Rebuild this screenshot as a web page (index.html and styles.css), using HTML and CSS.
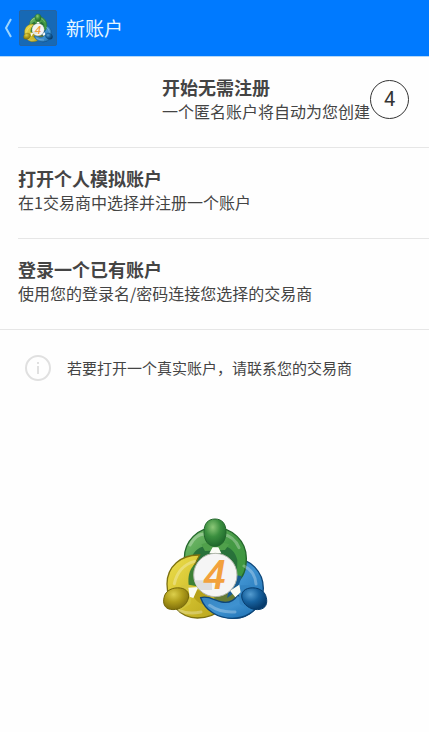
FILE: index.html
```html
<!DOCTYPE html>
<html lang="zh-CN">
<head>
<meta charset="utf-8">
<meta name="viewport" content="width=device-width, initial-scale=1">
<title>新账户</title>
<link rel="stylesheet" href="styles.css">
</head>
<body>

<header class="topbar">
<a class="back" href="#" aria-label="返回">
<svg class="chevron" viewBox="0 0 8 20"><path d="M7 1 L2 10 L7 19"/></svg>
<span class="app-icon"><svg viewBox="20 20 320 315"><use href="#mt-logo"/></svg></span>
</a>
<h1>新账户</h1>
</header>

<main>
<ul class="options">
<li>
<a class="option option-start" href="#">
<span class="text"><strong>开始无需注册</strong><span>一个匿名账户将自动为您创建</span></span>
<span class="badge">4</span>
</a>
</li>
<li>
<a class="option" href="#">
<span class="text"><strong>打开个人模拟账户</strong><span>在1交易商中选择并注册一个账户</span></span>
</a>
</li>
<li>
<a class="option" href="#">
<span class="text"><strong>登录一个已有账户</strong><span>使用您的登录名/密码连接您选择的交易商</span></span>
</a>
</li>
</ul>

<p class="info">
<svg class="info-icon" viewBox="0 0 26 26"><circle cx="13" cy="13" r="12"/><path d="M13 11V19M13 7V9"/></svg>
<span>若要打开一个真实账户，请联系您的交易商</span>
</p>

<svg class="logo" viewBox="0 0 360 345" role="img" aria-label="MetaTrader 4">
<defs>
<radialGradient id="green" cx=".4" cy=".3" r=".7"><stop offset="0" stop-color="#8cc878"/><stop offset=".5" stop-color="#3b8f3f"/><stop offset="1" stop-color="#1f692c"/></radialGradient>
<radialGradient id="yellow" cx=".4" cy=".3" r=".7"><stop offset="0" stop-color="#dccf4c"/><stop offset=".5" stop-color="#b09e1b"/><stop offset="1" stop-color="#80700c"/></radialGradient>
<radialGradient id="blue" cx=".35" cy=".3" r=".7"><stop offset="0" stop-color="#549cd0"/><stop offset=".5" stop-color="#17629f"/><stop offset="1" stop-color="#073c6d"/></radialGradient>
<linearGradient id="green-ring" x2="1" y2="1"><stop offset="0" stop-color="#7fc274"/><stop offset=".5" stop-color="#459a45"/><stop offset="1" stop-color="#3b963e"/></linearGradient>
<linearGradient id="yellow-ring" x2="1" y2="1"><stop offset="0" stop-color="#efe04e"/><stop offset=".5" stop-color="#d3c12f"/><stop offset="1" stop-color="#b5a11a"/></linearGradient>
<linearGradient id="blue-ring" x2="1" y2="1"><stop offset="0" stop-color="#3583c0"/><stop offset=".5" stop-color="#3f92d0"/><stop offset="1" stop-color="#1769ad"/></linearGradient>
<g id="mt-logo">
<!-- arms -->
<ellipse cx="237" cy="235" rx="88" ry="90" fill="url(#blue-ring)" stroke="#0d4679" stroke-width="4"/>
<path d="M180 53C231 53 274 92 274 145C274 180 262 205 246 216L110 210C96 192 88 172 88 145C88 92 129 53 180 53Z" fill="url(#green-ring)" stroke="#24672c" stroke-width="4"/>
<path d="M108 145C117 121 137 106 160 107H200C224 108 242 126 247 150L246 195H112Z" fill="#28713a"/>
<path d="M134 135C78 133 36 170 36 222C36 281 76 324 127 324C158 324 185 312 205 293L182 225L116 170Z" fill="url(#yellow-ring)" stroke="#7d7110" stroke-width="4"/>
<path d="M117 165C103 180 98 200 101 224L135 230L126 165Z" fill="#3c8035"/>
<path d="M104 235Q116 283 165 290L170 250Z" fill="#b5a11a"/>
<path d="M178 248H250V277H178Z" fill="#667b35"/>
<path d="M260 199C253 226 242 250 216 264L222 238L242 195Z" fill="#175b90"/>
<path d="M137 263C150 301 188 325 232 325C270 325 301 306 316 275L247 256C237 273 222 280 200 276C178 272 162 256 137 263Z" fill="url(#blue-ring)" stroke="#0d4679" stroke-width="4"/>
<path d="M58 221Q70 167 119 154M105 105Q126 66 157 73M204 73Q237 79 252 113M267 168Q300 184 303 222M164 286Q196 309 240 306M72 301Q100 314 138 306" fill="none" stroke="#fff" stroke-opacity=".28" stroke-width="9" stroke-linecap="round"/>
<!-- shoulders -->
<path d="M139 103Q158 94 180 102Q204 94 223 103L210 120L150 123Z" fill="#50a04b"/>
<path d="M79 226L115 228L106 282L76 301Z" fill="#d4c53b"/>
<path d="M286 226L250 226L254 282L286 301Z" fill="#3485c3"/>
<path d="M163 130L173 112H190L199 130Z M100 233L130 231L115 264L104 260Z M225 242L253 224L257 247L241 262Z" fill="#fafcf5"/>
<!-- heads -->
<path d="M180 27C201 27 213 41 213 65C213 91 201 109 180 109C159 109 147 91 147 65C147 41 159 27 180 27Z" fill="url(#green)" stroke="#23662c" stroke-width="3"/>
<path d="M27 263C31 241 54 231 76 234C97 237 106 252 98 271C90 291 67 302 46 298C29 295 23 281 27 263Z" fill="url(#yellow)" stroke="#736609" stroke-width="3"/>
<path d="M334 263C330 241 307 231 285 234C264 237 255 252 263 271C271 291 294 302 315 298C332 295 338 281 334 263Z" fill="url(#blue)" stroke="#073c6c" stroke-width="3"/>
<circle cx="181" cy="195" r="65" fill="#f5f5f5" stroke="#b5b8ae" stroke-width="3"/>
<path d="M118 211H171V240H136Q123 229 118 211Z" fill="#dedede"/>
<text class="logo-number" x="179" y="238" text-anchor="middle">4</text>
</g>
</defs>
<use href="#mt-logo"/>
</svg>
</main>

</body>
</html>
```
FILE: styles.css
```css
* {box-sizing:border-box;}
body {margin:0; background:#fefefe; color:#444; font-family:"Noto Sans CJK SC", sans-serif; font-size:16px; line-height:24px;}
a {color:inherit; text-decoration:none;}

.topbar {display:flex; align-items:center; gap:9px; height:57px; padding-left:4px; background:#007aff; border-bottom:1px solid #b5d8f7; color:#e5f6ff;}
.topbar h1 {margin:0; font-size:19px; font-weight:400;}
.back {display:flex; align-items:center; gap:7px;}
.chevron {width:8px; height:20px; fill:none; stroke:#9bd5ff; stroke-width:2;}
.app-icon {display:flex; align-items:center; justify-content:center; width:38px; height:36px; background:#1769b5; border:1px solid #2464a3; border-radius:2px;}
.app-icon svg {width:30px; height:30px;}

.options {margin:0; padding:0; list-style:none; border-bottom:1px solid #e6e6e6;}
.options li {margin-left:18px;}
.options li + li {border-top:1px solid #e6e6e6;}
.option {display:flex; align-items:center; padding:18px 20px 24px 0;}
.option-start {justify-content:flex-end;}
.text {display:flex; flex-direction:column;}
.text strong {font-size:18px; font-weight:700;}
.badge {display:flex; align-items:center; justify-content:center; width:39px; height:39px; border:1px solid #333; border-radius:50%; font-family:Roboto, sans-serif; font-size:20px; color:#333;}

.info {display:flex; align-items:center; gap:16px; margin:0; padding:24px 20px 24px 25px; font-size:15px; line-height:28px;}
.info-icon {flex:none; width:26px; height:26px; fill:none; stroke:#e0e0e0; stroke-width:2;}

.logo {display:block; width:120px; height:115px; margin:104px auto 0;}
.logo-number {font-family:Roboto, sans-serif; font-size:124px; font-weight:500; font-style:italic; fill:#f2a13c;}
```
